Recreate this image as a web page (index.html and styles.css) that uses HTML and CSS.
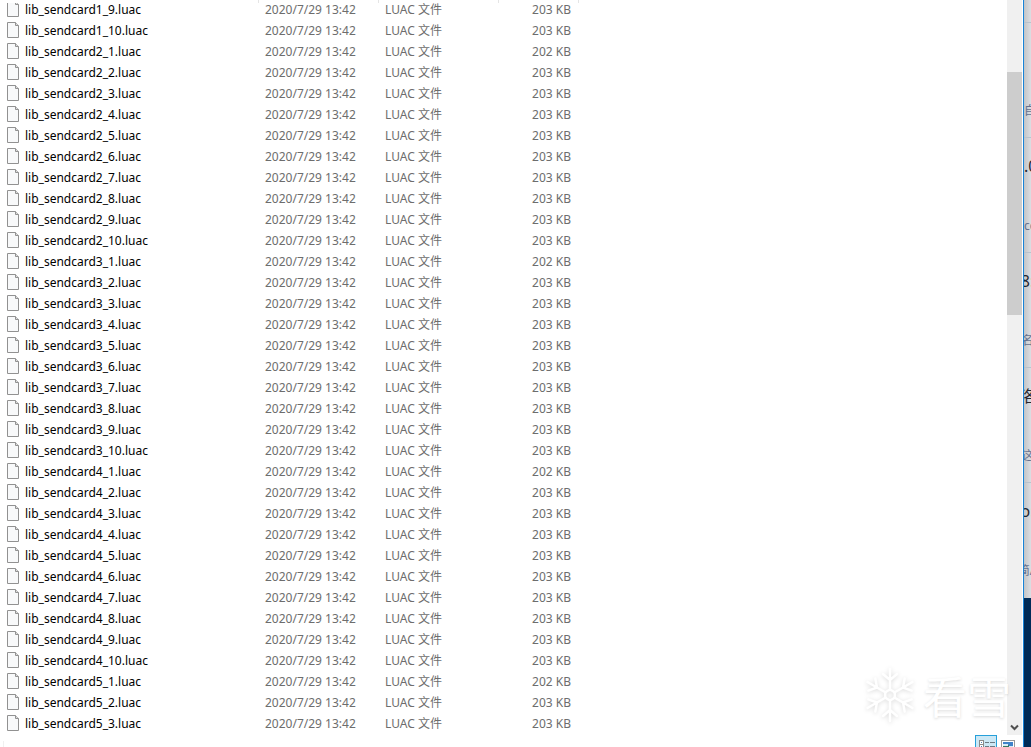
FILE: index.html
```html
<!DOCTYPE html>
<html lang="zh-CN">
<head>
<meta charset="utf-8">
<title>LUAC 文件</title>
<link rel="stylesheet" href="styles.css">
</head>
<body>
<div class="desktop">
<main class="explorer">
<div class="content">
<section class="files">
<div class="header-edge"><span class="col-name"></span><span class="col-date"></span><span class="col-type"></span><span class="col-size"></span></div>
<div class="viewport">
<table class="file-table">
<colgroup><col class="col-name"><col class="col-date"><col class="col-type"><col class="col-size"></colgroup>
<tbody>
<tr><td>lib_sendcard1_9.luac</td><td>2020/7/29 13:42</td><td>LUAC 文件</td><td>203 KB</td></tr>
<tr><td>lib_sendcard1_10.luac</td><td>2020/7/29 13:42</td><td>LUAC 文件</td><td>203 KB</td></tr>
<tr><td>lib_sendcard2_1.luac</td><td>2020/7/29 13:42</td><td>LUAC 文件</td><td>202 KB</td></tr>
<tr><td>lib_sendcard2_2.luac</td><td>2020/7/29 13:42</td><td>LUAC 文件</td><td>203 KB</td></tr>
<tr><td>lib_sendcard2_3.luac</td><td>2020/7/29 13:42</td><td>LUAC 文件</td><td>203 KB</td></tr>
<tr><td>lib_sendcard2_4.luac</td><td>2020/7/29 13:42</td><td>LUAC 文件</td><td>203 KB</td></tr>
<tr><td>lib_sendcard2_5.luac</td><td>2020/7/29 13:42</td><td>LUAC 文件</td><td>203 KB</td></tr>
<tr><td>lib_sendcard2_6.luac</td><td>2020/7/29 13:42</td><td>LUAC 文件</td><td>203 KB</td></tr>
<tr><td>lib_sendcard2_7.luac</td><td>2020/7/29 13:42</td><td>LUAC 文件</td><td>203 KB</td></tr>
<tr><td>lib_sendcard2_8.luac</td><td>2020/7/29 13:42</td><td>LUAC 文件</td><td>203 KB</td></tr>
<tr><td>lib_sendcard2_9.luac</td><td>2020/7/29 13:42</td><td>LUAC 文件</td><td>203 KB</td></tr>
<tr><td>lib_sendcard2_10.luac</td><td>2020/7/29 13:42</td><td>LUAC 文件</td><td>203 KB</td></tr>
<tr><td>lib_sendcard3_1.luac</td><td>2020/7/29 13:42</td><td>LUAC 文件</td><td>202 KB</td></tr>
<tr><td>lib_sendcard3_2.luac</td><td>2020/7/29 13:42</td><td>LUAC 文件</td><td>203 KB</td></tr>
<tr><td>lib_sendcard3_3.luac</td><td>2020/7/29 13:42</td><td>LUAC 文件</td><td>203 KB</td></tr>
<tr><td>lib_sendcard3_4.luac</td><td>2020/7/29 13:42</td><td>LUAC 文件</td><td>203 KB</td></tr>
<tr><td>lib_sendcard3_5.luac</td><td>2020/7/29 13:42</td><td>LUAC 文件</td><td>203 KB</td></tr>
<tr><td>lib_sendcard3_6.luac</td><td>2020/7/29 13:42</td><td>LUAC 文件</td><td>203 KB</td></tr>
<tr><td>lib_sendcard3_7.luac</td><td>2020/7/29 13:42</td><td>LUAC 文件</td><td>203 KB</td></tr>
<tr><td>lib_sendcard3_8.luac</td><td>2020/7/29 13:42</td><td>LUAC 文件</td><td>203 KB</td></tr>
<tr><td>lib_sendcard3_9.luac</td><td>2020/7/29 13:42</td><td>LUAC 文件</td><td>203 KB</td></tr>
<tr><td>lib_sendcard3_10.luac</td><td>2020/7/29 13:42</td><td>LUAC 文件</td><td>203 KB</td></tr>
<tr><td>lib_sendcard4_1.luac</td><td>2020/7/29 13:42</td><td>LUAC 文件</td><td>202 KB</td></tr>
<tr><td>lib_sendcard4_2.luac</td><td>2020/7/29 13:42</td><td>LUAC 文件</td><td>203 KB</td></tr>
<tr><td>lib_sendcard4_3.luac</td><td>2020/7/29 13:42</td><td>LUAC 文件</td><td>203 KB</td></tr>
<tr><td>lib_sendcard4_4.luac</td><td>2020/7/29 13:42</td><td>LUAC 文件</td><td>203 KB</td></tr>
<tr><td>lib_sendcard4_5.luac</td><td>2020/7/29 13:42</td><td>LUAC 文件</td><td>203 KB</td></tr>
<tr><td>lib_sendcard4_6.luac</td><td>2020/7/29 13:42</td><td>LUAC 文件</td><td>203 KB</td></tr>
<tr><td>lib_sendcard4_7.luac</td><td>2020/7/29 13:42</td><td>LUAC 文件</td><td>203 KB</td></tr>
<tr><td>lib_sendcard4_8.luac</td><td>2020/7/29 13:42</td><td>LUAC 文件</td><td>203 KB</td></tr>
<tr><td>lib_sendcard4_9.luac</td><td>2020/7/29 13:42</td><td>LUAC 文件</td><td>203 KB</td></tr>
<tr><td>lib_sendcard4_10.luac</td><td>2020/7/29 13:42</td><td>LUAC 文件</td><td>203 KB</td></tr>
<tr><td>lib_sendcard5_1.luac</td><td>2020/7/29 13:42</td><td>LUAC 文件</td><td>202 KB</td></tr>
<tr><td>lib_sendcard5_2.luac</td><td>2020/7/29 13:42</td><td>LUAC 文件</td><td>203 KB</td></tr>
<tr><td>lib_sendcard5_3.luac</td><td>2020/7/29 13:42</td><td>LUAC 文件</td><td>203 KB</td></tr>
</tbody>
</table>
</div>
</section>
<div class="scrollbar">
<div class="thumb"></div>
<button class="scroll-down" aria-label="向下滚动"><svg width="9" height="7" viewBox="0 0 9 7"><path d="M1 1.5 4.5 5 8 1.5" fill="none" stroke="#505050" stroke-width="2"/></svg></button>
</div>
</div>
<footer class="statusbar">
<span class="status-edge"></span>
<button class="view active" aria-label="详细信息"><svg width="20" height="11" viewBox="0 0 20 11" shape-rendering="crispEdges"><path d="M3.500 4.500h4v7h-4zM3.500 8.500h4" fill="#fff" stroke="#8a8a8a"/><path d="M5 6h1v1H5zM5 10h1v1H5z" fill="#4b83b5"/><path d="M9 6.500h4M14 6.500h5M9 10.500h4M14 10.500h5" stroke="#6d7b84"/></svg></button>
<button class="view" aria-label="大图标"><svg width="14" height="12" viewBox="0 0 14 12" shape-rendering="crispEdges"><path d="M.5 5.500h13v10H.5z" fill="#fff" stroke="#999"/><path d="M2 7h10v5H2z" fill="#3f83c9"/><path d="M2 9h4l2 2h4v1H2z" fill="#d5edf7"/><path d="M2 11h4l2-1v2H2z" fill="#39775f"/></svg></button>
</footer>
</main>
<aside class="background-page">
<div class="post"><p class="title"></p><p class="meta">自</p></div>
<div class="post"><p class="title">.0</p><p class="meta">cc</p></div>
<div class="post centered"><p class="title">8:</p><p class="meta">名</p></div>
<div class="post centered"><p class="title">洛</p><p class="meta">这</p></div>
<div class="post centered"><p class="title">o:</p><p class="meta">简A</p></div>
</aside>
</div>
<div class="watermark">
<svg width="50" height="56" viewBox="-25 -28 50 56" fill="none" stroke="#fff" stroke-width="2.4" stroke-linecap="round" stroke-linejoin="round"><defs><path id="arm" d="M0-5V-26M-7-21 0-15 7-21"/></defs><path d="M0-5.500 4.800-2.700V2.700L0 5.500-4.800 2.700V-2.700Z"/><use href="#arm"/><use href="#arm" transform="rotate(60)"/><use href="#arm" transform="rotate(120)"/><use href="#arm" transform="rotate(180)"/><use href="#arm" transform="rotate(240)"/><use href="#arm" transform="rotate(300)"/></svg>
<span>看雪</span>
</div>
</body>
</html>
```
FILE: styles.css
```css
* { box-sizing: border-box; }
body {
  margin: 0;
  background: #fff;
  font: 12px/18px "Noto Sans", "Noto Sans CJK SC", sans-serif;
  overflow: hidden;
}
button { border: 0; padding: 0; background: none; }
svg { display: block; }

.desktop { display: flex; height: 100vh; background: #002b57; }
.explorer {
  flex: 1;
  min-width: 0;
  display: flex;
  flex-direction: column;
  background: #fff;
  border-right: 1px solid #1883d7;
}
.content { flex: 1; min-height: 0; display: flex; }
.files { flex: 1; min-width: 0; display: flex; flex-direction: column; }

.header-edge { display: flex; height: 3px; }
.header-edge span { border-right: 1px solid #e5e5e5; }
.col-name { width: 259px; }
.col-date { width: 120px; }
.col-type { width: 120px; }
.col-size { width: 80px; }

.viewport { flex: 1; min-height: 0; overflow: hidden; }
.file-table {
  width: 579px;
  margin-top: -3px;
  table-layout: fixed;
  border-collapse: collapse;
  color: #6d6d6d;
}
.file-table td { height: 21px; padding: 0 6px 2px; white-space: nowrap; }
.file-table td:first-child {
  padding-left: 25px;
  color: #000;
  background: url("data:image/svg+xml,%3Csvg xmlns='http://www.w3.org/2000/svg' width='12' height='16'%3E%3Cpath d='M.5.5h8l3 3v12H.5z' fill='%23f8f9fa' stroke='%23919191'/%3E%3Cpath d='M8.500.5v3h3' fill='%23ddd' stroke='%23919191'/%3E%3C/svg%3E") 7px 1px no-repeat;
}
.file-table td:last-child { padding-right: 8px; text-align: right; }

.scrollbar {
  width: 16px;
  display: flex;
  flex-direction: column;
  background: #f0f0f0;
  border-right: 1px solid #fff;
}
.thumb { height: 243px; margin-top: 72px; background: #cdcdcd; }
.scroll-down {
  height: 16px;
  margin-top: auto;
  display: grid;
  place-items: center;
}

.statusbar {
  height: 12px;
  padding: 0 8px 0 3px;
  display: flex;
  gap: 4px;
  overflow: hidden;
}
.status-edge { width: 1px; margin: 6px auto 0 0; background: #f0f0f0; }
.view { display: flex; align-items: flex-start; }
.active {
  width: 22px;
  height: 22px;
  background: #cce8f5;
  border: 1px solid #26a0da;
}

.background-page {
  width: 7px;
  height: 598px;
  padding-top: 22px;
  overflow: hidden;
  background: linear-gradient(90deg, #c3c5c8, #dcdee2);
}
.post {
  height: 115px;
  padding-top: 18px;
  display: flex;
  flex-direction: column;
  align-items: flex-start;
  border-top: 1px solid #b9c3cd;
}
.centered { align-items: center; }
.post p { height: 20px; margin: 0; line-height: 20px; white-space: nowrap; }
.post .title { margin-bottom: 40px; color: #26262e; font-size: 16px; }
.post .meta { color: #65718f; }

.watermark {
  position: absolute;
  right: 20px;
  bottom: 24px;
  display: flex;
  align-items: center;
  gap: 8px;
  color: #fff;
  font: 400 44px/56px "Noto Sans CJK SC", sans-serif;
  text-shadow: 0 1px 3px rgba(0, 0, 0, .15);
  pointer-events: none;
}
.watermark svg { filter: drop-shadow(0 1px 2px rgba(0, 0, 0, .15)); }
```
